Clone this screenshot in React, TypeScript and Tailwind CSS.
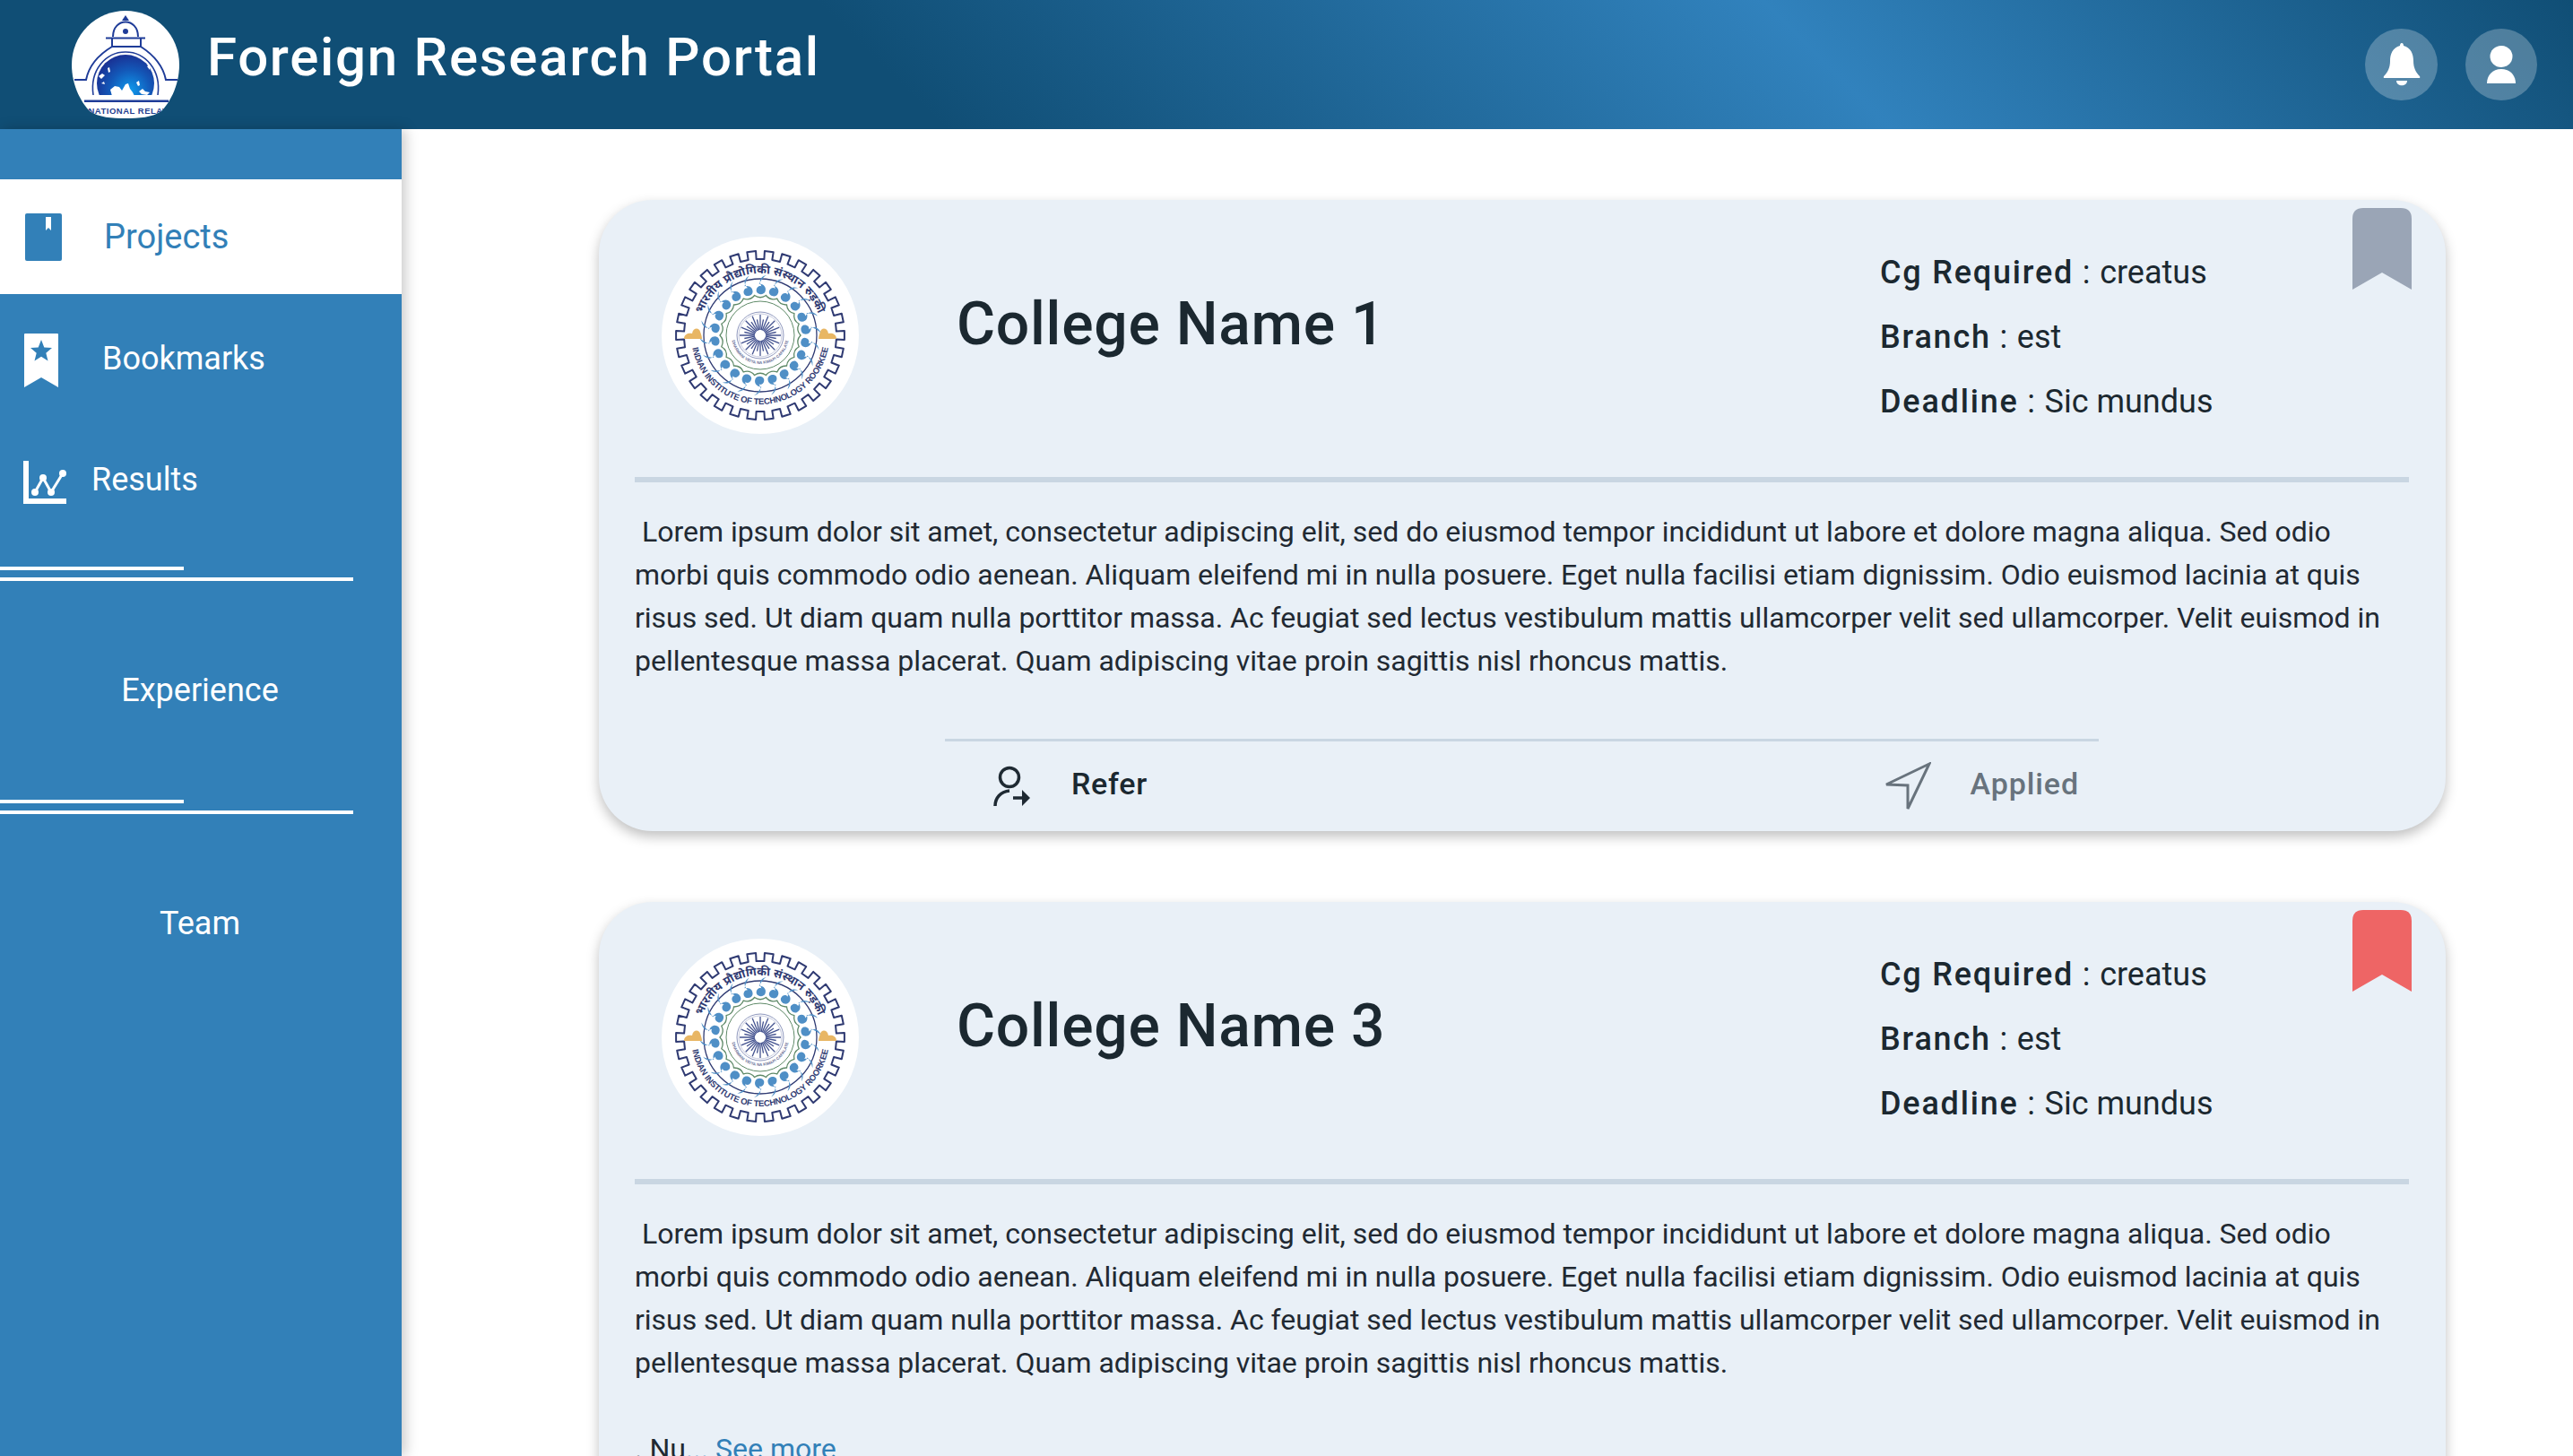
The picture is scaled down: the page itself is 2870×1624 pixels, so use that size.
import React from 'react';

const LOREM =
  'Lorem ipsum dolor sit amet, consectetur adipiscing elit, sed do eiusmod tempor incididunt ut labore et dolore magna aliqua. Sed odio morbi quis commodo odio aenean. Aliquam eleifend mi in nulla posuere. Eget nulla facilisi etiam dignissim. Odio euismod lacinia at quis risus sed. Ut diam quam nulla porttitor massa. Ac feugiat sed lectus vestibulum mattis ullamcorper velit sed ullamcorper. Velit euismod in pellentesque massa placerat. Quam adipiscing vitae proin sagittis nisl rhoncus mattis.';

function PortalLogo() {
  return (
    <svg viewBox="0 0 120 120" className="h-[120px] w-[120px] shrink-0">
      <defs>
        <radialGradient id="globeFill" cx="0.58" cy="0.62" r="0.65">
          <stop offset="0" stopColor="#0f9aec" />
          <stop offset="0.55" stopColor="#1358b8" />
          <stop offset="1" stopColor="#1a2f92" />
        </radialGradient>
        <clipPath id="logoClip">
          <path d="M0 60 A60 60 0 0 1 120 60 C120 85 108 104 100 112 C90 119 75 120 60 120 C45 120 30 119 20 112 C12 104 0 85 0 60 Z" />
        </clipPath>
        <clipPath id="globeClip">
          <rect x="0" y="0" width="120" height="94" />
        </clipPath>
      </defs>
      <g clipPath="url(#logoClip)">
        <rect width="120" height="120" fill="#fff" />
        <path d="M60 5 L64 11 H56 Z" fill="#1f3c98" />
        <path d="M46 29 C46 7 74 7 74 29" fill="none" stroke="#1f3c98" strokeWidth="2" />
        <circle cx="60" cy="23" r="3" fill="#1f3c98" />
        <path d="M38 30.500 H82" stroke="#1f3c98" strokeWidth="2" />
        <path
          d="M3 77 H16 C19 62 30 49 45 40 H77 C91 49 102 62 105 77 H118 M45 40 V31 M77 40 V31"
          fill="none"
          stroke="#1f3c98"
          strokeWidth="2"
        />
        <path d="M24 94 C20 66 38 46 60 46 C82 46 100 66 96 94" fill="none" stroke="#1f3c98" strokeWidth="1.600" />
        <g clipPath="url(#globeClip)">
          <circle cx="60" cy="81" r="32" fill="url(#globeFill)" />
          <path d="M45 95 L43 88 L48 84 L53 85 L56 89 L60 82 L63 81 L65 87 L68 91 L70 95 Z" fill="#fff" />
          <path d="M75 90 L79 87 L82 90 L87 91 L84 94 L78 93 Z M72 80 L75 78 L76 83 L74 84 Z" fill="#fff" />
          <path d="M30 73 L34 70 L37 72 L33 76 Z M40 64 L42 63 L43 68 L41 69 Z M33 81 L36 79 L37 82 Z M84 62 L87 60 L87 66 Z" fill="#fff" />
        </g>
        <rect x="14" y="99.500" width="94" height="2.500" fill="#1f3c98" />
        <text
          x="60"
          y="115"
          textAnchor="middle"
          fontFamily="'Liberation Sans', sans-serif"
          fontSize="9.500"
          fontWeight="700"
          letterSpacing="0.500"
          fill="#24408f"
        >
          INTERNATIONAL RELATIONS
        </text>
      </g>
    </svg>
  );
}

function gearPath() {
  const teeth = 30;
  const outer = 94;
  const inner = 85;
  const step = (Math.PI * 2) / teeth;
  let d = '';
  for (let i = 0; i < teeth; i++) {
    const a = i * step - step / 4;
    const pts = [
      [inner, a],
      [outer, a],
      [outer, a + step / 2],
      [inner, a + step / 2],
    ];
    pts.forEach(([r, t]) => {
      d += `${d ? 'L' : 'M'}${(110 + r * Math.cos(t)).toFixed(1)} ${(110 + r * Math.sin(t)).toFixed(1)} `;
    });
  }
  return d + 'Z';
}

function scallopPath() {
  const n = 22;
  const p = (r: number, t: number) => `${(110 + r * Math.cos(t)).toFixed(1)} ${(110 + r * Math.sin(t)).toFixed(1)}`;
  let d = '';
  for (let i = 0; i < n; i++) {
    const a = (i / n) * Math.PI * 2;
    const b = ((i + 0.5) / n) * Math.PI * 2;
    const c = ((i + 1) / n) * Math.PI * 2;
    d += `${i === 0 ? `M${p(45, a)} ` : ''}Q${p(40, b)} ${p(45, c)} `;
  }
  return d + 'Z';
}

function CollegeSeal({ id }: { id: string }) {
  const swirls = Array.from({ length: 22 }, (_, i) => (i * 360) / 22);
  const spokes = Array.from({ length: 32 }, (_, i) => (i * 360) / 32);
  const navy = '#2f3a72';
  return (
    <svg viewBox="0 0 220 220" className="h-[220px] w-[220px] shrink-0 rounded-full bg-white">
      <defs>
        <path id={`${id}Top`} d="M41 110 A69 69 0 0 1 179 110" />
        <path id={`${id}Bottom`} d="M33 110 A77 77 0 0 0 187 110" />
        <path id={`${id}Motto`} d="M78 110 A32 32 0 0 0 142 110" />
      </defs>
      <path d={gearPath()} fill="none" stroke={navy} strokeWidth="2" strokeLinejoin="round" />
      <circle cx="110" cy="110" r="63" fill="none" stroke={navy} strokeWidth="1.300" />
      <text fontFamily="'Noto Sans', 'Liberation Sans', sans-serif" fontSize="13" fontWeight="700" fill={navy}>
        <textPath href={`#${id}Top`} startOffset="50%" textAnchor="middle">
          भारतीय प्रौद्योगिकी संस्थान रुड़की
        </textPath>
      </text>
      <text fontFamily="'Liberation Sans', sans-serif" fontSize="9.500" fontWeight="700" letterSpacing="-0.200" fill={navy}>
        <textPath href={`#${id}Bottom`} startOffset="50%" textAnchor="middle">
          INDIAN INSTITUTE OF TECHNOLOGY ROORKEE
        </textPath>
      </text>
      {swirls.map((deg) => (
        <path
          key={deg}
          d="M110 53 C114 53 116 56 115 59 C114 62 109 62 108 59 C107.500 56 110 54 112 55 C109 50 112 47 116 46 C113 48 112 50 110 53 Z"
          fill="#4f8fc6"
          transform={`rotate(${deg} 110 110) translate(110 54) scale(1.4) translate(-111 -54)`}
        />
      ))}
      <path d={scallopPath()} fill="none" stroke="#5f8a68" strokeWidth="1.300" />
      <circle cx="110" cy="110" r="38" fill="none" stroke="#5f8a68" strokeWidth="1" />
      <circle cx="110" cy="110" r="26" fill="none" stroke="#8f98bd" strokeWidth="1" />
      <circle cx="110" cy="110" r="24" fill="none" stroke="#b8bdd5" strokeWidth="0.800" />
      {spokes.map((deg, i) => (
        <path
          key={deg}
          d={i % 2 ? 'M110 104 L110 92' : 'M110 104 L110 87'}
          transform={`rotate(${deg} 110 110)`}
          stroke="#43528f"
          strokeWidth="1.300"
        />
      ))}
      <text fontFamily="'Liberation Sans', sans-serif" fontSize="4.500" fontWeight="700" fill="#6a7199">
        <textPath href={`#${id}Motto`} startOffset="50%" textAnchor="middle">
          DHARMANI VIDYA NA KIMAPI CAPALATE
        </textPath>
      </text>
      <path d="M25 114 C25 108 31 107 34 108 C35 101 42 101 43 106 C44 109 45 111 45 114 Z" fill="#e8b664" />
      <path d="M195 114 C195 108 189 107 186 108 C185 101 178 101 177 106 C176 109 175 111 175 114 Z" fill="#e8b664" />
    </svg>
  );
}

function BookIcon() {
  return (
    <svg viewBox="0 0 41 53" className="h-[53px] w-[41px] shrink-0">
      <rect width="41" height="53" rx="2" fill="#3280b8" />
      <path d="M23 4 H29 V19 L26 16 L23 19 Z" fill="#fff" />
    </svg>
  );
}

function BookmarkStarIcon() {
  return (
    <svg viewBox="0 0 38 60" className="h-[60px] w-[38px] shrink-0">
      <path d="M0 1 Q0 0 1 0 H37 Q38 0 38 1 V60 L19 49 L0 60 Z" fill="#fff" />
      <path
        d="M19 7 L22.300 15.500 L31 16 L24.300 21.800 L26.500 30.500 L19 25.800 L11.500 30.500 L13.700 21.800 L7 16 L15.700 15.500 Z"
        fill="#3280b8"
      />
    </svg>
  );
}

function ChartIcon() {
  return (
    <svg viewBox="0 0 48 48" className="h-[48px] w-[48px] shrink-0">
      <path d="M3 0 V45 H48" fill="none" stroke="#fff" strokeWidth="6" />
      <path d="M13 35 L22 19 L31 35 L44 14" fill="none" stroke="#fff" strokeWidth="3" />
      <circle cx="13" cy="35" r="4" fill="#fff" />
      <circle cx="22" cy="19" r="4" fill="#fff" />
      <circle cx="31" cy="35" r="4" fill="#fff" />
      <circle cx="44" cy="14" r="4" fill="#fff" />
    </svg>
  );
}

function BellIcon() {
  return (
    <svg viewBox="0 0 42 48" className="h-[48px] w-[42px]">
      <path
        d="M21 0 C22.500 0 23 1.500 23 3 C31 5 34 12 34 20 C34 28 37 33 41 37 Q42 39 40 39 H2 Q0 39 1 37 C5 33 8 28 8 20 C8 12 11 5 19 3 C19 1.500 19.500 0 21 0 Z"
        fill="#fff"
      />
      <path d="M15 42 H27 C27 49 15 49 15 42 Z" fill="#fff" />
    </svg>
  );
}

function UserIcon() {
  return (
    <svg viewBox="0 0 32 42" className="h-[42px] w-[32px]">
      <ellipse cx="16" cy="12" rx="12.500" ry="12" fill="#fff" />
      <path d="M0 42 C0 33 6 26 16 26 C26 26 32 33 32 42 Z" fill="#fff" />
    </svg>
  );
}

function ReferIcon() {
  return (
    <svg viewBox="0 0 42 46" className="h-[46px] w-[42px] shrink-0">
      <circle cx="18" cy="13" r="10.500" fill="none" stroke="#1f2a33" strokeWidth="3.500" />
      <path d="M2 45 C2 36 8 29 18 28" fill="none" stroke="#1f2a33" strokeWidth="3.500" />
      <path d="M22 36 H34" stroke="#1f2a33" strokeWidth="3.500" />
      <path d="M32 27 L41 36 L32 45 Z" fill="#1f2a33" />
    </svg>
  );
}

function PlaneIcon() {
  return (
    <svg viewBox="0 0 52 54" className="h-[54px] w-[52px] shrink-0">
      <path d="M50 2 L2 25 L26 26 L26 52 Z" fill="none" stroke="#68737d" strokeWidth="3" strokeLinejoin="miter" />
    </svg>
  );
}

function BookmarkFlag({ color }: { color: string }) {
  return (
    <svg viewBox="0 0 66 91" className="absolute right-[38px] top-[9px] h-[91px] w-[66px]">
      <path d="M0 12 Q0 0 12 0 H54 Q66 0 66 12 V91 L33 72 L0 91 Z" fill={color} />
    </svg>
  );
}

function Detail({ label, value }: { label: string; value: string }) {
  return (
    <p className="text-[36px] leading-[72px] text-[#1b2830]">
      <span className="font-medium tracking-[1.8px]">{label}</span>
      <span className="tracking-[0.8px]"> : </span>
      {value}
    </p>
  );
}

function ProjectCard({ id, name, flag, more }: { id: string; name: string; flag: string; more?: boolean }) {
  return (
    <article className="relative rounded-[60px] bg-[#e9f0f7] pl-[40px] pr-[41px] pt-[41px] shadow-[0_6px_14px_rgba(0,0,0,0.25)]">
      <BookmarkFlag color={flag} />
      <div className="flex h-[220px] items-start pl-[30px]">
        <CollegeSeal id={id} />
        <h2 className="ml-[109px] mt-[60px] w-[1030px] text-[66px] font-medium leading-[76px] tracking-[0.75px] text-[#1b2830]">
          {name}
        </h2>
        <div className="mt-[4px]">
          <Detail label="Cg Required" value="creatus" />
          <Detail label="Branch" value="est" />
          <Detail label="Deadline" value="Sic mundus" />
        </div>
      </div>
      <div className="mt-[48px] h-[6px] bg-[#c9d6e2]" />
      <p className="mt-[31px] text-[32px] leading-[48px] tracking-[-0.02px] text-[#212932]">
        <span className="pl-[8px]">{LOREM}</span>
      </p>
      {more && (
        <p className="mt-[48px] text-[32px] leading-[48px] text-[#212932]">
          . Nu
          <span className="text-[#3280b8]">... See more</span>
        </p>
      )}
      <div className={`${more ? 'mt-[24px]' : 'mt-[63px]'} mx-[346px] h-[3px] bg-[#c9d6e2]`} />
      <div className="ml-[400px] mr-[368px] flex h-[100px] items-center justify-between">
        <div className="flex items-center gap-[45px]">
          <ReferIcon />
          <span className="mb-[6px] text-[34px] font-medium tracking-[0.7px] text-[#1b2830]">Refer</span>
        </div>
        <div className="flex items-center gap-[44px]">
          <PlaneIcon />
          <span className="mb-[6px] text-[34px] font-medium tracking-[0.9px] text-[#68737d]">Applied</span>
        </div>
      </div>
    </article>
  );
}

function NavDivider() {
  return (
    <div className="flex flex-col gap-[8px]">
      <div className="h-[4px] w-[205px] bg-white" />
      <div className="h-[4px] w-[394px] bg-white" />
    </div>
  );
}

export default function App() {
  return (
    <div className="flex h-[1624px] w-[2870px] flex-col overflow-hidden bg-white font-['Roboto',sans-serif]">
      <header className="flex h-[144px] shrink-0 items-center bg-[linear-gradient(45deg,#104e75_35%,#3182bd_70%,#104e75_100%)] pl-[80px] pr-[40px]">
        <PortalLogo />
        <h1 className="mb-[16px] ml-[31px] flex-1 text-[60px] font-medium leading-[70px] tracking-[1.7px] text-white">
          Foreign Research Portal
        </h1>
        <div className="flex gap-[31px]">
          <button className="flex h-[80px] w-[81px] items-center justify-center rounded-full bg-white/25">
            <BellIcon />
          </button>
          <button className="flex h-[80px] w-[80px] items-center justify-center rounded-full bg-white/25">
            <UserIcon />
          </button>
        </div>
      </header>

      <div className="flex min-h-0 flex-1">
        <aside className="z-10 w-[448px] shrink-0 bg-[#3280b8] pt-[56px] text-white shadow-[4px_0_14px_rgba(0,0,0,0.22)]">
          <div className="flex h-[128px] items-center bg-white pl-[28px]">
            <BookIcon />
            <span className="ml-[47px] text-[38px] text-[#3280b8]">Projects</span>
          </div>
          <div className="mt-[44px] flex h-[60px] items-center pl-[27px]">
            <BookmarkStarIcon />
            <span className="mb-[4px] ml-[49px] text-[36px]">Bookmarks</span>
          </div>
          <div className="mt-[82px] flex h-[48px] items-center pl-[26px]">
            <ChartIcon />
            <span className="mb-[6px] ml-[28px] text-[36px]">Results</span>
          </div>
          <div className="mt-[70px]">
            <NavDivider />
          </div>
          <div className="flex h-[244px] items-center justify-center pr-[2px] text-[36px]">Experience</div>
          <NavDivider />
          <div className="flex h-[244px] items-center justify-center pr-[2px] text-[36px]">Team</div>
        </aside>

        <main className="flex min-w-0 flex-1 flex-col gap-[79px] pl-[220px] pr-[142px] pt-[79px]">
          <ProjectCard id="sealOne" name="College Name 1" flag="#9aa5b6" />
          <ProjectCard id="sealThree" name="College Name 3" flag="#ee6565" more />
        </main>
      </div>
    </div>
  );
}
